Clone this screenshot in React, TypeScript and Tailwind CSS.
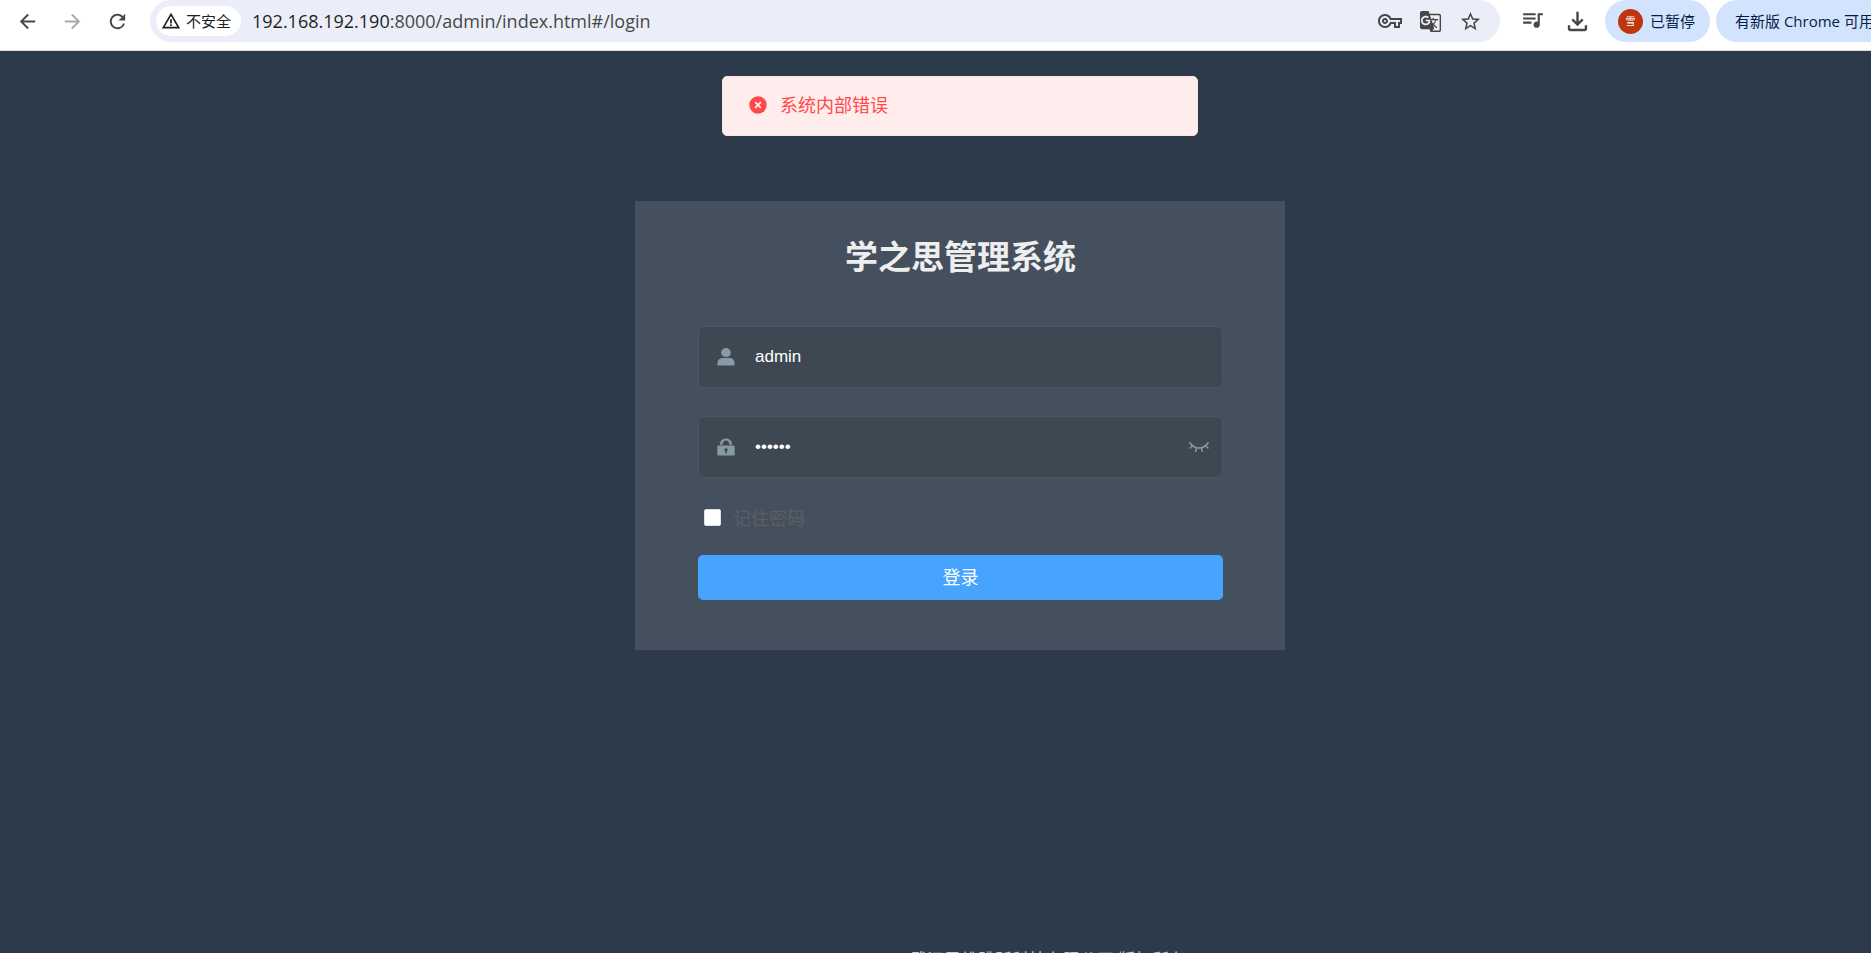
import { useState } from 'react';
import {
  MdArrowBack,
  MdArrowForward,
  MdGTranslate,
  MdOutlineFileDownload,
  MdOutlineVpnKey,
  MdQueueMusic,
  MdRefresh,
  MdStarBorder,
  MdWarningAmber,
} from 'react-icons/md';

function UserIcon() {
  return (
    <svg viewBox="0 0 18 18" className="w-[18px] h-[18px]" fill="currentColor" aria-hidden="true">
      <ellipse cx="9" cy="4.6" rx="4.9" ry="4.5" />
      <path d="M0.5 17.5v-2.2c0-3 2.2-5.2 5-5.2h7c2.800 0 5 2.200 5 5.200v2.200z" />
    </svg>
  );
}

function LockIcon() {
  return (
    <svg viewBox="0 0 18 18" className="w-[18px] h-[18px]" fill="currentColor" aria-hidden="true">
      <path d="M2.900 6.700C3 3 5.600 0.600 9 0.600S15 3 15.100 6.700h-2.600C12.400 4.300 11 2.600 9 2.600S5.600 4.300 5.500 6.700z" />
      <path
        fillRule="evenodd"
        d="M1.500 7.600h15a1.200 1.200 0 0 1 1.200 1.200v7.500a1.200 1.200 0 0 1-1.200 1.200h-15a1.200 1.200 0 0 1-1.200-1.200v-7.500a1.200 1.200 0 0 1 1.200-1.200zM9 10.300a1.700 1.700 0 0 0-.8 3.200v1.700h1.600v-1.700a1.700 1.700 0 0 0-.8-3.200z"
      />
    </svg>
  );
}

function ClosedEyeIcon() {
  return (
    <svg viewBox="0 0 20 10" className="w-5 h-[10px]" fill="none" stroke="currentColor" strokeWidth="1.500" strokeLinecap="round" aria-hidden="true">
      <path d="M0.800 0.800C3.500 4.500 6.500 6.100 10 6.100S16.500 4.500 19.200 0.800" />
      <path d="M3.400 3.700L1.300 6M7.500 5.900L6.700 9.200M12.500 5.900l.8 3.300M16.600 3.700L18.900 6" />
    </svg>
  );
}

function ErrorIcon() {
  return (
    <svg viewBox="0 0 18 18" className="w-[18px] h-[18px]" aria-hidden="true">
      <circle cx="9" cy="9" r="8.700" fill="#ff4949" />
      <path d="M6.200 6.200l5.600 5.600M11.800 6.200l-5.600 5.600" stroke="#ffecec" strokeWidth="1.900" />
    </svg>
  );
}

function BrowserBar() {
  return (
    <header className="flex h-[51px] shrink-0 items-start overflow-hidden whitespace-nowrap border-b border-[#dcdfe3] bg-white pl-[5px] text-[#474747] font-['Open_Sans','Noto_Sans_CJK_SC',sans-serif]">
      <nav className="flex h-[42px] shrink-0 items-center">
        <button type="button" aria-label="后退" className="flex w-[45px] justify-center">
          <MdArrowBack size={23} />
        </button>
        <button type="button" aria-label="前进" className="flex w-[45px] justify-center text-[#a9a9a9]">
          <MdArrowForward size={23} />
        </button>
        <button type="button" aria-label="刷新" className="flex w-[45px] justify-center">
          <MdRefresh size={23} />
        </button>
      </nav>

      <div className="ml-[10px] flex h-[42px] min-w-0 flex-1 items-center rounded-full bg-[#ebeef8] pl-[6px] pr-[18px]">
        <button type="button" className="flex h-[30px] w-[85px] shrink-0 items-center gap-[5px] rounded-full bg-white pl-[5px] text-[15px] text-[#1f1f1f]">
          <MdWarningAmber size={20} />
          不安全
        </button>
        <p className="ml-[11px] flex-1 text-[18px]">
          <span className="text-[#1f1f1f]">192.168.192.190</span>:8000/admin/index.html#/login
        </p>
        <div className="flex items-center gap-[17px]">
          <button type="button" aria-label="密码">
            <MdOutlineVpnKey size={24} />
          </button>
          <button type="button" aria-label="翻译">
            <MdGTranslate size={23} />
          </button>
          <button type="button" aria-label="收藏">
            <MdStarBorder size={23} />
          </button>
        </div>
      </div>

      <div className="flex h-[42px] shrink-0 items-center">
        <button type="button" aria-label="媒体" className="ml-5 pb-[3px]">
          <MdQueueMusic size={25} />
        </button>
        <button type="button" aria-label="下载" className="ml-[18px]">
          <MdOutlineFileDownload size={29} />
        </button>
        <button type="button" className="ml-[13px] flex h-[42px] w-[105px] items-center gap-[7px] rounded-full bg-[#d3e3fd] pl-[13px] text-[15px] text-[#041e49]">
          <span className="flex h-[25px] w-[25px] items-center justify-center rounded-full bg-[#bf360c] text-[10px] text-white">雪</span>
          已暂停
        </button>
        <button type="button" className="ml-[6px] h-[42px] w-[155px] overflow-hidden rounded-l-full bg-[#d3e3fd] pl-[19px] text-left text-[15px] text-[#041e49]">
          有新版 Chrome 可用
        </button>
      </div>
    </header>
  );
}

function LoginForm() {
  const [userName, setUserName] = useState('admin');
  const [password, setPassword] = useState('123456');
  const [remember, setRemember] = useState(false);
  const [visible, setVisible] = useState(false);

  return (
    <form
      onSubmit={(e) => e.preventDefault()}
      className="mt-[65px] w-[650px] max-w-full bg-[#45505f] pl-[63px] pr-[62px] pb-[50px] pt-[29px]"
    >
      <h3 className="text-center text-[33px] font-bold leading-[50px] text-[#eeeeee]">学之思管理系统</h3>

      <div className="mt-[46px] flex h-[62px] items-center rounded-md border border-[#4b5663] bg-[#3d4852] pl-[18px] text-[#889aa4]">
        <label htmlFor="userName" aria-label="用户名">
          <UserIcon />
        </label>
        <input
          id="userName"
          value={userName}
          onChange={(e) => setUserName(e.target.value)}
          className="ml-5 h-full min-w-0 flex-1 bg-transparent font-['Liberation_Sans',sans-serif] text-[17px] text-white outline-none"
        />
      </div>

      <div className="mt-7 flex h-[62px] items-center rounded-md border border-[#4b5663] bg-[#3d4852] pl-[18px] pr-[13px] text-[#889aa4]">
        <label htmlFor="password" aria-label="密码">
          <LockIcon />
        </label>
        <input
          id="password"
          type={visible ? 'text' : 'password'}
          value={password}
          onChange={(e) => setPassword(e.target.value)}
          className="ml-5 h-full min-w-0 flex-1 bg-transparent font-['Liberation_Sans',sans-serif] text-[17px] text-white outline-none"
        />
        <button type="button" aria-label="显示密码" onClick={() => setVisible(!visible)}>
          <ClosedEyeIcon />
        </button>
      </div>

      <div className="mt-[27px] flex h-6 items-center pl-[6px]">
        <input
          id="remember"
          type="checkbox"
          checked={remember}
          onChange={(e) => setRemember(e.target.checked)}
          className="h-[17px] w-[17px] appearance-none rounded-xs border border-[#dcdfe6] bg-white checked:bg-[#409eff]"
        />
        <label htmlFor="remember" className="pl-3 text-[18px] leading-6 text-[#5c5e62]">
          记住密码
        </label>
      </div>

      <button type="submit" className="mt-[26px] h-[45px] w-full rounded-[5px] bg-[#46a4ff] pb-[2px] text-[18px] text-white">
        登录
      </button>
    </form>
  );
}

export default function App() {
  return (
    <div className="flex h-screen flex-col overflow-hidden bg-[#2d3a4b] font-['Noto_Sans_CJK_SC',sans-serif]">
      <BrowserBar />
      <main className="flex flex-1 flex-col items-center overflow-hidden pl-[49px] pt-[25px]">
        <div role="alert" className="flex h-[60px] w-[476px] shrink-0 items-center gap-[13px] rounded-[5px] border border-[#fde2e2] bg-[#ffecec] pb-[2px] pl-[26px]">
          <ErrorIcon />
          <p className="pb-[2px] text-[18px] leading-6 text-[#ff4949]">系统内部错误</p>
        </div>
        <LoginForm />
        <footer className="mt-[297px] shrink-0 pl-44 text-[17px] leading-6 text-[#cccccc]">
          武汉思维跳跃科技有限公司 版权所有
        </footer>
      </main>
    </div>
  );
}
